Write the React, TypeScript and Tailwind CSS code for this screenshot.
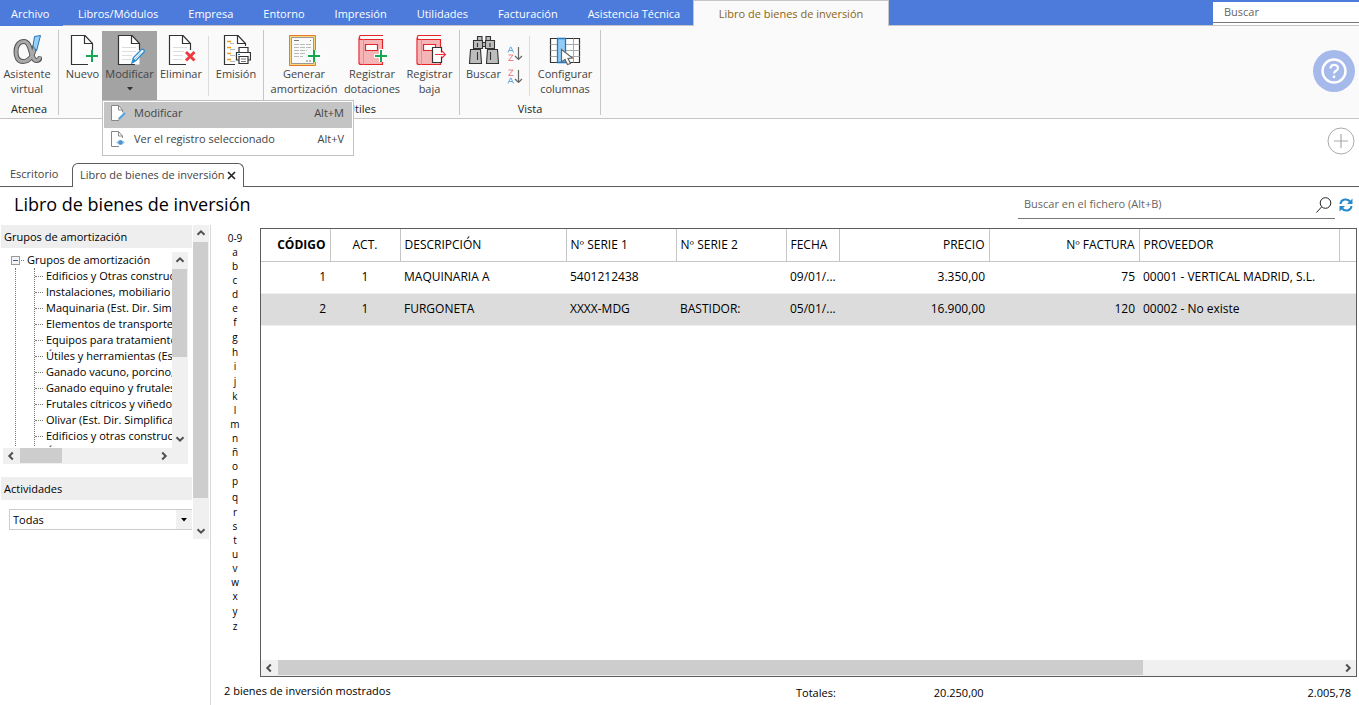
import type { ReactNode } from "react"
import { clsx } from "clsx"

const menus = ["Libros/Módulos", "Empresa", "Entorno", "Impresión", "Utilidades", "Facturación", "Asistencia Técnica"]

const groups = [
    "Edificios y Otras construcciones",
    "Instalaciones, mobiliario y enseres",
    "Maquinaria (Est. Dir. Simplificada)",
    "Elementos de transporte",
    "Equipos para tratamiento de información",
    "Útiles y herramientas (Est. Dir. Simplificada)",
    "Ganado vacuno, porcino, ovino y caprino",
    "Ganado equino y frutales no cítricos",
    "Frutales cítricos y viñedos",
    "Olivar (Est. Dir. Simplificada)",
    "Edificios y otras construcciones",
    "Útiles y herramientas",
]

const letters = "0-9 a b c d e f g h i j k l m n ñ o p q r s t u v w x y z".split(" ")

const columns = [
    { name: "CÓDIGO", width: "w-[69px]", align: "text-right", bold: true },
    { name: "ACT.", width: "w-[70px]", align: "text-center" },
    { name: "DESCRIPCIÓN", width: "w-[166px]", align: "text-left" },
    { name: "Nº SERIE 1", width: "w-[110px]", align: "text-left" },
    { name: "Nº SERIE 2", width: "w-[110px]", align: "text-left" },
    { name: "FECHA", width: "w-[53px]", align: "text-left" },
    { name: "PRECIO", width: "w-[150px]", align: "text-right" },
    { name: "Nº FACTURA", width: "w-[150px]", align: "text-right" },
    { name: "PROVEEDOR", width: "w-[200px]", align: "text-left" },
]

const rows = [
    ["1", "1", "MAQUINARIA A", "5401212438", "", "09/01/...", "3.350,00", "75", "00001 - VERTICAL MADRID, S.L."],
    ["2", "1", "FURGONETA", "XXXX-MDG", "BASTIDOR:", "05/01/...", "16.900,00", "120", "00002 - No existe"],
]

function Sheet({ lines, children }: { lines?: boolean; children?: ReactNode }) {
    return (
        <svg viewBox="0 0 30 31" className="h-[31px] w-[30px]" fill="none">
            <path d="M3.500 .5H17L24.500 8.500V29.500H3.500Z" fill="#fff" />
            <path d="M24.500 15V8.500L17 .5H3.500V29.500H20" stroke="#333" strokeWidth="1.200" />
            <path d="M16.500 .5V8.500H24.500" stroke="#333" strokeWidth="1.200" />
            {lines && <path d="M7 12.500H21M7 16.500H21M7 20.500H17M7 24.500H16" stroke="#ddd" />}
            {children}
        </svg>
    )
}

function Pencil() {
    return (
        <g>
            <path d="M17 28L18.500 22.500L26.500 14.500C28 13.500 30 15.500 29 17L21 25.500Z" fill="#fff" stroke="#2f8ecb" strokeWidth="1.400" />
            <path d="M17 28L18.500 23L21 25.500Z" fill="#2f8ecb" />
            <path d="M20 24L26 17.500" stroke="#8cc4ea" />
        </g>
    )
}

function Plus() {
    return (
        <g>
            <path d="M17 21H30M23.500 15V27" stroke="#fff" strokeWidth="4" />
            <path d="M18 21H30M24 15V27" stroke="#12a84f" strokeWidth="2" />
        </g>
    )
}

function AlphaIcon() {
    return (
        <svg viewBox="0 0 30 31" className="h-[31px] w-[30px]" fill="none">
            <path d="M23 10C22 17 19 26.500 11 26.500C6 26.500 4 22 4 17C4 10.500 7 6.500 12 6.500C20 6.500 18 25.500 24.500 25.500C26.500 25.500 28 24 28.500 21.500" stroke="#555" strokeWidth="5" />
            <path d="M23 10C22 17 19 26.500 11 26.500C6 26.500 4 22 4 17C4 10.500 7 6.500 12 6.500C20 6.500 18 25.500 24.500 25.500C26.500 25.500 27.500 24 28 22" stroke="#a9a9a9" strokeWidth="3" />
            <path d="M22.500 1.500L28.500 .5L24.500 16L21 11Z" fill="#9bd0f5" stroke="#2176bd" />
        </svg>
    )
}

function PrintIcon() {
    return (
        <Sheet>
            <path d="M6 6.500H10M6 12.500H10M6 18.500H10M6 24.500H10" stroke="#f29b1d" strokeWidth="1.300" />
            <path d="M9 8.500H13M9 14.500H15M9 20.500H14M9 26.500H14" stroke="#bbb" />
            <path d="M14 11H30V30H14Z" fill="#fafafa" />
            <path d="M18 17V12.500H27V17M18 25H15.500V17.500H29.500V25H27" fill="#fff" stroke="#333" strokeWidth="1.200" />
            <path d="M18 21.500H27V28.500H18Z" fill="#fff" stroke="#333" strokeWidth="1.200" />
            <path d="M20 24H25M20 26.500H25" stroke="#777" />
            <path d="M17 19.500H19" stroke="#2176bd" />
        </Sheet>
    )
}

function CertificateIcon() {
    return (
        <svg viewBox="0 0 34 31" className="h-[31px] w-[34px]" fill="none">
            <path d="M2.500 .5H28.500V30.500H2.500Z" fill="#f9d77f" stroke="#e8792b" />
            <path d="M4.500 2.500H26.500V28.500H4.500Z" fill="#fafafa" stroke="#999" />
            <path d="M7 5.500H12M23 5.500H24" stroke="#777" />
            <path d="M7 9.500H24M7 12.500H24M7 15.500H20M7 18.500H19M7 21.500H16" stroke="#bbb" strokeDasharray="5 1" />
            <path d="M19 26H24" stroke="#bbb" strokeWidth="2" strokeDasharray="2 1" />
            <path d="M20 21H34M27 15V27" stroke="#fff" strokeWidth="4" />
            <path d="M21 21H33M27 15V27" stroke="#12a84f" strokeWidth="2" />
        </svg>
    )
}

function BookIcon({ exit }: { exit?: boolean }) {
    return (
        <svg viewBox="0 0 32 31" className="h-[31px] w-8" fill="none">
            <path d="M3.500 4.500H26.500V29.500H3.500Z" fill="#f5b5b7" />
            <path d="M26.500 1V.5H5C3 .5 2.500 4.500 5 4.500H26.500V16M26.500 27V29.500H5C3.500 29.500 3 29 3 27.500V3" stroke="#e6252b" strokeWidth="1.200" />
            <path d="M7.500 4.500V29.500" stroke="#ef8b8e" />
            <path d="M9.500 9.500H21.500V15.500H9.500Z" fill="#fff" stroke="#e6252b" strokeWidth="1.200" />
            {exit ? (
                <>
                    <path d="M18.500 12.500H27.500V27.500H18.500Z" fill="#fff" stroke="#333" strokeWidth="1.200" />
                    <path d="M24 19.500H33" stroke="#fff" strokeWidth="4" />
                    <path d="M21 19.500H31M28 16L31.500 19.500L28 23" stroke="#ef3038" strokeWidth="1.200" />
                </>
            ) : (
                <>
                    <path d="M18 21H32M25 14V27" stroke="#fff" strokeWidth="4" />
                    <path d="M19 21H31M25 15V27" stroke="#12a84f" strokeWidth="2" />
                </>
            )}
        </svg>
    )
}

function BinocularsIcon() {
    return (
        <svg viewBox="0 0 32 31" className="h-[31px] w-8" fill="#bdbdbd" stroke="#333" strokeWidth="1.100">
            <path d="M9.500 1.500H14V5.500H9.500ZM18 1.500H22.500V5.500H18ZM14 7.500H18V11.500H14Z" />
            <path d="M5.500 5.500H14.500V13.500H5.500ZM17.500 5.500H26.500V13.500H17.500Z" />
            <path d="M2.500 14.500H12.500L13.500 28.500H1.500ZM19.500 14.500H29.500L30.500 28.500H18.500Z" />
            <path d="M9.500 8V12M22 8V12M9.500 17V25M22.500 17V25" />
        </svg>
    )
}

function SortIcon({ desc }: { desc?: boolean }) {
    const top = desc ? "#ee7f83" : "#62a9e0"
    const bottom = desc ? "#62a9e0" : "#ee7f83"
    return (
        <svg viewBox="0 0 16 16" className="size-4" fill="none">
            <path d={desc ? "M1.500 1H6L1.500 6.500H6.500" : "M1 6.500L3.500 1H4L6.500 6.500M2 4.500H5.500"} stroke={top} />
            <path d={desc ? "M1 14.500L3.500 9H4L6.500 14.500M2 12.500H5.500" : "M1.500 9H6L1.500 14.500H6.500"} stroke={bottom} />
            <path d="M11.500 1V13.500M8 10L11.500 13.500L15 10" stroke="#666" strokeWidth="1.200" />
        </svg>
    )
}

function ColumnsIcon() {
    return (
        <svg viewBox="0 0 32 31" className="h-[31px] w-8" fill="none">
            <path d="M1.500 3.500H30.500V27.500H1.500Z" fill="#fff" stroke="#333" strokeWidth="1.200" />
            <path d="M1.500 9.500H30.500M1.500 15.500H30.500M1.500 21.500H30.500M24.500 3.500V27.500" stroke="#aaa" />
            <path d="M8.500 3.500H16.500V27.500H8.500Z" fill="#93ccf5" stroke="#1e7ac4" strokeWidth="1.300" />
            <path d="M12.500 14.500V27L16 24.500L18.500 29.500L21.500 28.500L19 23.500L23.500 23Z" fill="#fff" stroke="#666" strokeWidth="1.200" />
        </svg>
    )
}

function SmallSheet({ eye }: { eye?: boolean }) {
    return (
        <svg viewBox="0 0 16 16" className="size-4" fill="none">
            <path d="M12.500 6V5L8.500 .5H1.500V15.500H8V13L12.500 9Z" fill="#fff" />
            <path d="M12.500 7V5L8.500 .5H1.500V15.500H9" stroke="#888" />
            <path d="M8.500 .5V5H12.500" stroke="#888" />
            {eye ? (
                <>
                    <path d="M6 11.500Q10.500 6.500 15 11.500Q10.500 16 6 11.500Z" fill="#a9cdec" />
                    <circle cx="10.500" cy="11.500" r="2.200" fill="#4c93cf" />
                </>
            ) : (
                <path d="M9 14L15 8" stroke="#52a5de" strokeWidth="2" />
            )}
        </svg>
    )
}

function Chevron({ className }: { className: string }) {
    return (
        <svg viewBox="0 0 10 10" className={clsx("size-[10px]", className)} fill="none">
            <path d="M1.500 6.800L5 3.300L8.500 6.800" stroke="#505050" strokeWidth="2" />
        </svg>
    )
}

function ScrollButton({ label, turn }: { label: string; turn: string }) {
    return (
        <button aria-label={label} className="flex size-4 shrink-0 items-center justify-center">
            <Chevron className={turn} />
        </button>
    )
}

function RibbonButton({ icon, width, children }: { icon: ReactNode; width: string; children: ReactNode }) {
    return (
        <button className={clsx("flex h-[69px] flex-col items-center pt-1 leading-[15px] whitespace-nowrap", width)}>
            {icon}
            {children}
        </button>
    )
}

function RibbonGroup({ title, width, children }: { title: string; width: string; children: ReactNode }) {
    return (
        <div className={clsx("flex flex-col border-r border-[#c6c6c6]", width)}>
            <div className="flex h-[74px] justify-end pt-px">{children}</div>
            <div className="text-center leading-3 text-[#222]">{title}</div>
        </div>
    )
}

function Divider() {
    return <div className="mt-[5px] h-[60px] w-px shrink-0 bg-[#dcdcdc]" />
}

function TopMenu() {
    return (
        <nav className="flex h-[26px] shrink-0 bg-[#4c7bdc] text-white">
            <a href="#archivo" className="w-[63px] pl-[11px] leading-7">Archivo</a>
            <div className="flex w-[630px] border-b border-[#c6c6c6] leading-7 whitespace-nowrap">
                {menus.map((menu) => (
                    <a key={menu} href="#menu" className="px-[15px]">{menu}</a>
                ))}
            </div>
            <a href="#libro" className="w-[196px] border border-b-0 border-[#c6c6c6] bg-[#fafafa] text-center leading-[26px] text-[#8a6414]">
                Libro de bienes de inversión
            </a>
            <div className="flex-1 border-b border-[#c6c6c6]" />
            <div className="w-[146px] border-b border-[#c6c6c6] bg-white">
                <input aria-label="Buscar" placeholder="Buscar" className="block h-[23px] w-full border-t-2 border-b border-t-[#4c7bdc] border-b-[#777] px-[11px] pb-[2px] outline-none placeholder:text-[#666]" />
            </div>
        </nav>
    )
}

function Ribbon() {
    return (
        <div className="flex h-[93px] shrink-0 border-b border-[#c6c6c6] bg-[#fafafa] pt-1 text-[#444]">
            <div className="flex h-[85px]">
                <RibbonGroup title="Atenea" width="w-[59px]">
                    <RibbonButton icon={<AlphaIcon />} width="w-[58px] pr-1">Asistente<br />virtual</RibbonButton>
                </RibbonGroup>
                <RibbonGroup title="" width="w-[205px]">
                    <RibbonButton icon={<Sheet><Plus /></Sheet>} width="w-[39px]">Nuevo</RibbonButton>
                    <div className="relative">
                        <button className="flex h-[69px] w-[55px] flex-col items-center bg-[#a3a3a3] pt-1 leading-[15px]">
                            <Sheet lines><Pencil /></Sheet>
                            Modificar
                            <svg viewBox="0 0 6 4" className="mt-[6px] h-1 w-[6px]"><path d="M0 0H6L3 3.500Z" fill="#333" /></svg>
                        </button>
                        <ul className="absolute top-[69px] left-0 z-10 h-14 w-[252px] border border-[#c3c3c3] bg-white p-px">
                            <li>
                                <button className="flex h-[26px] w-full items-center bg-[#c4c4c4] pr-2 pb-1 pl-[6px]">
                                    <SmallSheet />
                                    <span className="ml-2">Modificar</span>
                                    <span className="ml-auto">Alt+M</span>
                                </button>
                            </li>
                            <li>
                                <button className="flex h-[26px] w-full items-center pr-2 pb-1 pl-[6px]">
                                    <SmallSheet eye />
                                    <span className="ml-2">Ver el registro seleccionado</span>
                                    <span className="ml-auto">Alt+V</span>
                                </button>
                            </li>
                        </ul>
                    </div>
                    <RibbonButton
                        icon={<Sheet lines><path d="M19 16L29 26M29 16L19 26" stroke="#fff" strokeWidth="5" /><path d="M20 17L28.500 25.500M28.500 17L20 25.500" stroke="#ef3b3f" strokeWidth="3" /></Sheet>}
                        width="w-[51px] pr-[3px]"
                    >
                        Eliminar
                    </RibbonButton>
                    <Divider />
                    <RibbonButton icon={<PrintIcon />} width="w-[54px]">Emisión</RibbonButton>
                </RibbonGroup>
                <RibbonGroup title="Útiles" width="w-[196px]">
                    <RibbonButton icon={<CertificateIcon />} width="w-[72px]">Generar<br />amortización</RibbonButton>
                    <RibbonButton icon={<BookIcon />} width="w-16">Registrar<br />dotaciones</RibbonButton>
                    <RibbonButton icon={<BookIcon exit />} width="w-[55px] pr-1">Registrar<br />baja</RibbonButton>
                </RibbonGroup>
                <RibbonGroup title="Vista" width="w-[141px]">
                    <RibbonButton icon={<BinocularsIcon />} width="w-[47px]">Buscar</RibbonButton>
                    <div className="flex w-[22px] flex-col gap-[7px] pt-[15px]">
                        <button aria-label="Orden ascendente"><SortIcon /></button>
                        <button aria-label="Orden descendente"><SortIcon desc /></button>
                    </div>
                    <Divider />
                    <RibbonButton icon={<ColumnsIcon />} width="w-[70px]">Configurar<br />columnas</RibbonButton>
                </RibbonGroup>
            </div>
            <button aria-label="Ayuda" className="mt-5 mr-1 ml-auto flex size-[42px] items-center justify-center rounded-full bg-[#a5b9ea]">
                <svg viewBox="0 0 26 26" className="size-[26px]" fill="none" stroke="#fff">
                    <circle cx="13" cy="13" r="11.500" strokeWidth="2.400" />
                    <path d="M9.500 10.500C9.500 5.500 17 6 17 10C17 13 13 12.500 13 15.500" strokeWidth="2.200" />
                    <path d="M13 17.500V20" strokeWidth="2.400" />
                </svg>
            </button>
        </div>
    )
}

function DocumentTabs() {
    return (
        <div className="flex h-[68px] shrink-0">
            <div className="flex w-[72px] items-end border-b border-[#5c5c5c] pb-1 pl-[10px] text-[#444]">
                <a href="#escritorio">Escritorio</a>
            </div>
            <div className="mt-[44px] flex w-[172px] items-center justify-between rounded-t-md border border-b-0 border-[#5c5c5c] px-[7px] whitespace-nowrap text-[#444]">
                <a href="#libro">Libro de bienes de inversión</a>
                <button aria-label="Cerrar">
                    <svg viewBox="0 0 9 9" className="size-[9px]"><path d="M1 1L8 8M8 1L1 8" stroke="#222" strokeWidth="1.600" /></svg>
                </button>
            </div>
            <div className="flex flex-1 items-start justify-end border-b border-[#5c5c5c] pt-2 pr-1">
                <button aria-label="Añadir">
                    <svg viewBox="0 0 28 28" className="size-7" fill="none" stroke="#aaa">
                        <circle cx="14" cy="14" r="13" />
                        <path d="M7 14H21M14 7V21" strokeWidth="1.200" />
                    </svg>
                </button>
            </div>
        </div>
    )
}

function TitleBar() {
    return (
        <div className="flex h-[38px] shrink-0 items-start">
            <h1 className="pl-[14px] text-[18px] leading-[34px]">Libro de bienes de inversión</h1>
            <div className="ml-auto flex h-8 w-[317px] items-center border-b border-[#777] pr-[3px]">
                <input aria-label="Buscar en el fichero" placeholder="Buscar en el fichero (Alt+B)" className="flex-1 px-[6px] pt-[3px] outline-none placeholder:text-[#666]" />
                <button aria-label="Buscar" className="pt-1">
                    <svg viewBox="0 0 16 16" className="size-4" fill="none" stroke="#222">
                        <circle cx="9.500" cy="6" r="5.300" />
                        <path d="M5.500 10L.5 15.500" />
                    </svg>
                </button>
            </div>
            <button aria-label="Actualizar" className="mt-[11px] mr-[6px] ml-1">
                <svg viewBox="0 0 14 14" className="size-[14px]" fill="none">
                    <path d="M1.500 6C2 1 8 0 11 3.500M12.500 8C12 13 6 14 3 10.500" stroke="#2689ca" strokeWidth="2" />
                    <path d="M13.500 .5V6H8ZM.5 13.500V8H6Z" fill="#2689ca" />
                </svg>
            </button>
        </div>
    )
}

function Sidebar() {
    return (
        <aside className="flex w-[211px] shrink-0 border-r border-[#d8d8d8] text-[11px]">
            <div className="min-w-0 flex-1 pl-px">
                <h2 className="h-[23px] bg-[#eee] pl-[3px] leading-6">Grupos de amortización</h2>
                <div className="mt-1 mr-1 ml-[2px]">
                    <div className="flex h-[196px]">
                        <div className="h-[195px] min-w-0 flex-1 overflow-hidden leading-4 whitespace-nowrap">
                            <div className="flex items-center pl-2">
                                <button aria-label="Contraer" className="flex size-[9px] items-center justify-center border border-[#999] bg-[#f4f4f4]">
                                    <span className="h-px w-[5px] bg-[#3a5cae]" />
                                </button>
                                <span className="ml-px w-[3px] border-t border-dotted border-[#777]" />
                                <span className="ml-[3px]">Grupos de amortización</span>
                            </div>
                            <div className="ml-3 border-l border-dotted border-[#777] pl-[18px]">
                                <ul className="border-l border-dotted border-[#777]">
                                    {groups.map((group, i) => (
                                        <li key={i} className="flex items-center">
                                            <span className="mr-[3px] w-2 shrink-0 border-t border-dotted border-[#777]" />
                                            {group}
                                        </li>
                                    ))}
                                </ul>
                            </div>
                        </div>
                        <div className="flex w-4 flex-col bg-[#f0f0f0]">
                            <ScrollButton label="Subir" turn="rotate-0" />
                            <div className="mt-px h-[88px] w-[15px] bg-[#cdcdcd]" />
                            <div className="mt-auto pb-px"><ScrollButton label="Bajar" turn="rotate-180" /></div>
                        </div>
                    </div>
                    <div className="flex h-4 bg-[#f0f0f0] pr-4">
                        <ScrollButton label="Izquierda" turn="-rotate-90" />
                        <div className="ml-px h-[15px] w-[42px] bg-[#cdcdcd]" />
                        <div className="ml-auto"><ScrollButton label="Derecha" turn="rotate-90" /></div>
                    </div>
                </div>
                <h2 className="mt-[13px] h-[23px] bg-[#eee] pl-[3px] leading-6">
                    <label htmlFor="actividades">Actividades</label>
                </h2>
                <div className="relative mt-[9px] ml-2 h-[21px]">
                    <select id="actividades" className="h-full w-full appearance-none border border-r-0 border-[#ccc] bg-white pt-px pl-[3px] outline-none">
                        <option>Todas</option>
                    </select>
                    <span className="pointer-events-none absolute top-px right-0 flex h-[19px] w-4 items-center justify-center bg-[#f0f0f0]">
                        <svg viewBox="0 0 6 4" className="h-1 w-[6px]"><path d="M0 0H6L3 3.500Z" /></svg>
                    </span>
                </div>
            </div>
            <div className="mr-px ml-px flex h-[314px] w-4 flex-col bg-[#f0f0f0]">
                <ScrollButton label="Subir panel" turn="rotate-0" />
                <div className="mt-px h-[256px] w-[15px] bg-[#cdcdcd]" />
                <div className="mt-auto"><ScrollButton label="Bajar panel" turn="rotate-180" /></div>
            </div>
        </aside>
    )
}

function AssetTable() {
    return (
        <div className="mt-[3px] flex flex-1 flex-col border border-[#5c5c5c]">
            <table className="w-full table-fixed text-[12px]">
                <thead>
                    <tr className="h-8 border-b border-[#c6c6c6]">
                        {columns.map((column) => (
                            <th key={column.name} className={clsx("border-r border-[#c6c6c6] px-1 whitespace-nowrap", column.width, column.align, column.bold ? "font-bold" : "font-normal")}>
                                {column.name}
                            </th>
                        ))}
                        <th />
                    </tr>
                </thead>
                <tbody>
                    {rows.map((row, i) => (
                        <tr key={i} className={clsx("h-8 border-b border-[#efefef]", i === 1 && "bg-[#dcdcdc]")}>
                            {row.map((cell, j) => (
                                <td key={j} className={clsx("px-1 whitespace-nowrap", columns[j].align)}>{cell}</td>
                            ))}
                            <td />
                        </tr>
                    ))}
                </tbody>
            </table>
            <div className="mt-auto flex h-4 bg-[#f0f0f0]">
                <ScrollButton label="Desplazar a la izquierda" turn="-rotate-90" />
                <div className="ml-px h-[15px] w-[79%] bg-[#cdcdcd]" />
                <div className="ml-auto"><ScrollButton label="Desplazar a la derecha" turn="rotate-90" /></div>
            </div>
        </div>
    )
}

export default function App() {
    return (
        <div className="flex min-h-screen flex-col bg-white font-['Open_Sans',sans-serif] text-[11px] text-black">
            <TopMenu />
            <Ribbon />
            <DocumentTabs />
            <TitleBar />
            <main className="flex flex-1">
                <Sidebar />
                <ul className="w-12 shrink-0 pt-[6px] text-center text-[10px] leading-[14px]">
                    {letters.map((letter) => (
                        <li key={letter} className={clsx("gjpqy".includes(letter) && "h-4 leading-4")}>
                            <a href="#letra">{letter}</a>
                        </li>
                    ))}
                </ul>
                <div className="flex min-w-0 flex-1 flex-col pr-[2px] pl-px">
                    <AssetTable />
                    <div className="flex h-7 items-center">
                        <span className="-ml-9 w-[572px]">2 bienes de inversión mostrados</span>
                        <span className="pt-1">Totales:</span>
                        <span className="ml-[98px] pt-1">20.250,00</span>
                        <span className="mr-[6px] ml-auto pt-1">2.005,78</span>
                    </div>
                </div>
            </main>
        </div>
    )
}
